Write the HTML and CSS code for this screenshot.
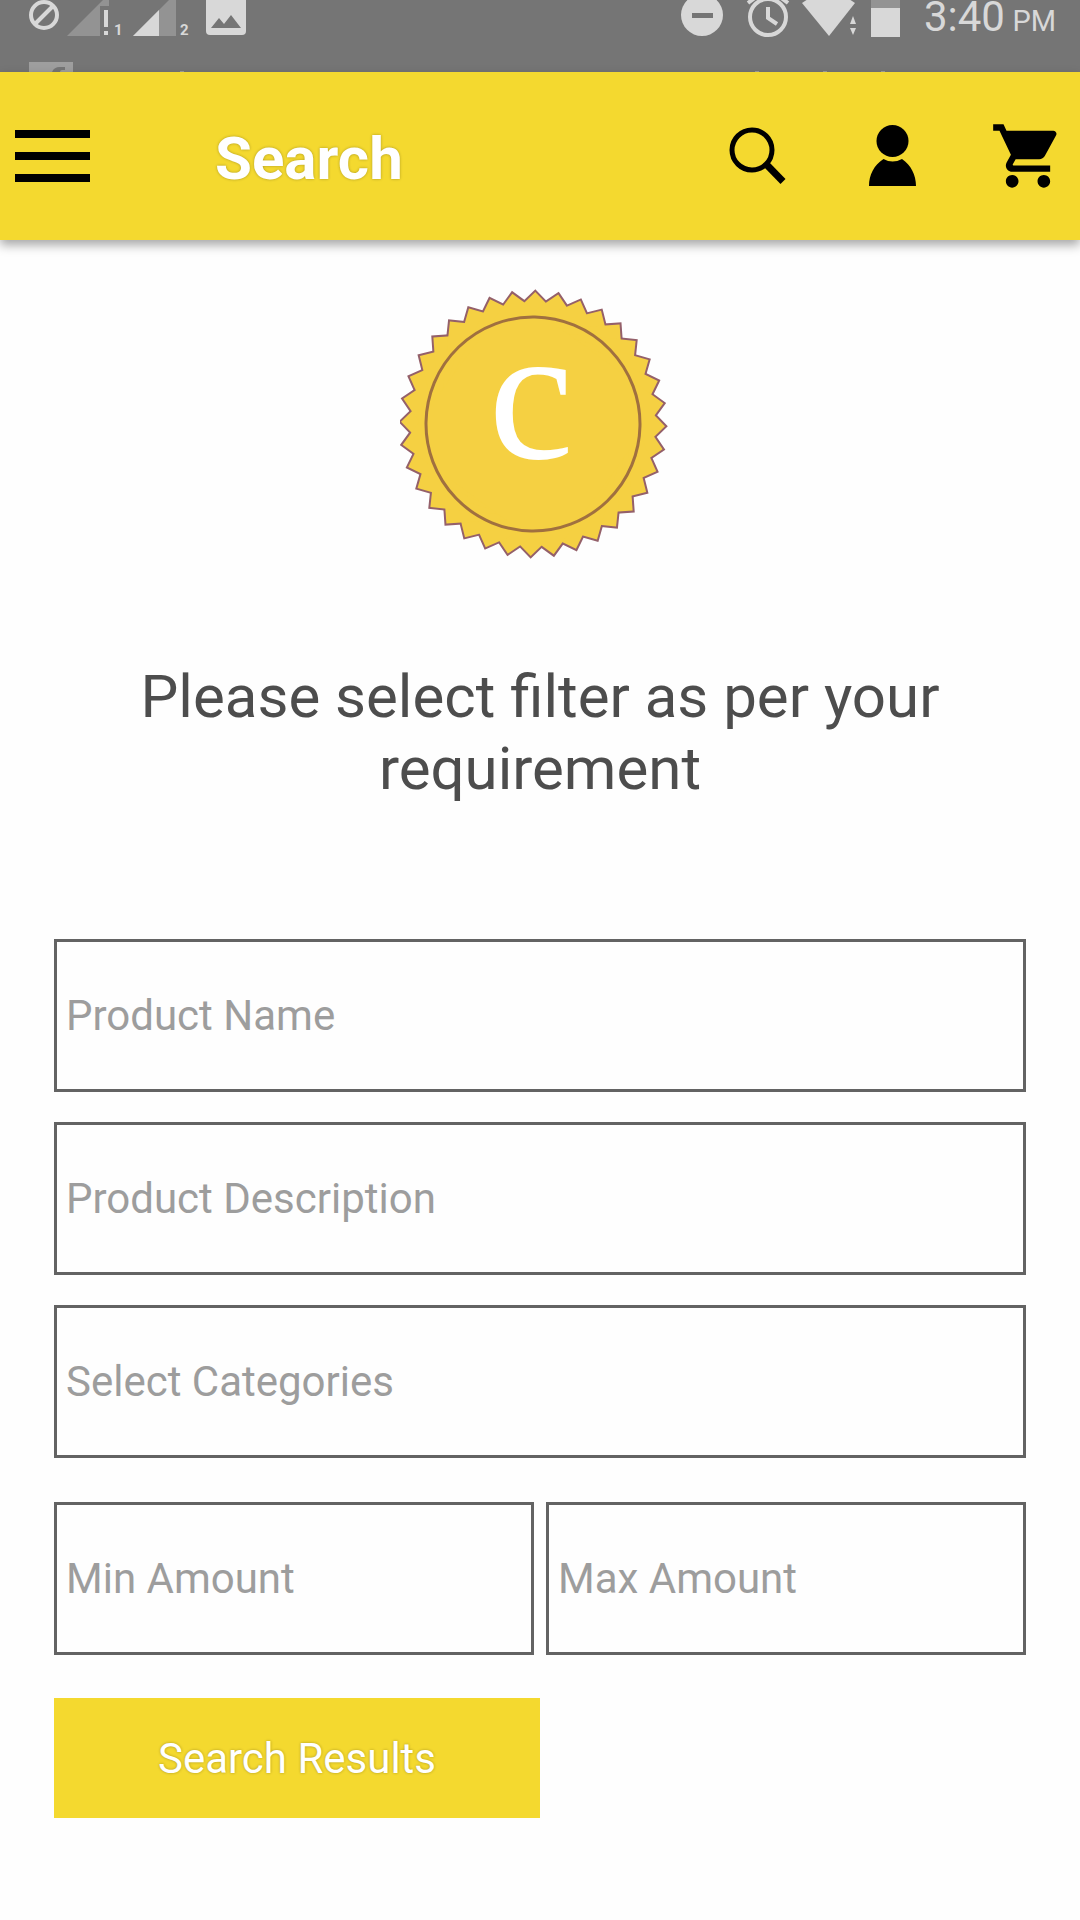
FILE: index.html
```html
<!DOCTYPE html>
<html lang="en">
<head>
<meta charset="utf-8">
<meta name="viewport" content="width=device-width, initial-scale=1">
<title>Search</title>
<link rel="stylesheet" href="styles.css">
</head>
<body>
<div class="status">
  <svg class="status-left" viewBox="0 0 260 72" aria-hidden="true">
    <g class="line"><circle cx="44" cy="15" r="13"/><path d="M35 24 53 6"/></g>
    <path class="dim" d="M67 36 103 0h6v6h-9v30z"/>
    <path class="lit" d="M104 10h4v17h-4zM104 31h4v4h-4z"/>
    <path class="dim" d="M133 36 169 0h7v36z"/>
    <path class="lit" d="M133 36 159 10v26z"/>
    <path class="lit" d="M206 0h40v31q0 4-4 4h-32q-4 0-4-4z"/>
    <path class="hole" d="M211 28 219 18 224 24 231 15 241 28z"/>
    <text class="sim" x="114" y="35">1</text>
    <text class="sim" x="180" y="35">2</text>
    <path class="ghost" d="M29 62h44v10H29z"/>
    <path class="hole" d="M52 72q2-5 8-5h5v3h-3q-2 0-2 2z"/>
    <path class="ghost" d="M180 71h4v1h-4z"/>
  </svg>
  <svg class="status-right" viewBox="0 0 224 72" aria-hidden="true">
    <circle class="lit" cx="22" cy="15" r="21"/>
    <path class="hole" d="M12 13h21v5H12z"/>
    <g class="line"><circle cx="88" cy="17" r="18"/><path d="M88 7v11l9 6M68 3l8-6M108 3l-8-6"/></g>
    <path class="lit" d="M122 3 128-1h41l6 4-26 33z"/>
    <path class="lit" d="M173 16l3 8h-6zM170 28h6l-3 7z"/>
    <path class="dim" d="M191 0h29v8h-29z"/>
    <path class="lit" d="M191 8h29v29h-29z"/>
    <path class="ghost" d="M75 71h4v1h-4zM143 71h4v1h-4zM201 71h4v1h-4z"/>
  </svg>
  <div class="clock">3:40 <span class="meridiem">PM</span></div>
</div>

<header class="bar">
  <button class="icon-btn" type="button" aria-label="Menu">
    <svg class="menu-icon" viewBox="0 0 75 76"><path d="M0 12h75v8H0zM0 34h75v8H0zM0 56h75v8H0z"/></svg>
  </button>
  <h1 class="title">Search</h1>
  <nav class="actions" aria-label="Shortcuts">
    <button class="icon-btn" type="button" aria-label="Search">
      <svg class="icon" viewBox="0 0 76 76"><circle cx="34" cy="32" r="20" fill="none" stroke="#000" stroke-width="5"/><path d="M48 46 65 63.500" stroke="#000" stroke-width="7"/></svg>
    </button>
    <button class="icon-btn" type="button" aria-label="Account">
      <svg class="icon" viewBox="0 0 76 76"><circle cx="38.500" cy="23" r="16"/><path d="M15 68C15 57 20 47 29.500 41Q38.500 46 48 41C57 47 62 57 62 68z"/></svg>
    </button>
    <button class="icon-btn" type="button" aria-label="Cart">
      <svg class="icon" viewBox="0 0 24 24"><path d="M7 18c-1.100 0-1.990.9-1.990 2S5.900 22 7 22s2-.9 2-2-.9-2-2-2zM1 2v2h2l3.600 7.590-1.350 2.450c-.16.280-.25.610-.25.960 0 1.100.9 2 2 2h12v-2H7.420c-.14 0-.25-.11-.25-.25l.03-.12.900-1.630h7.450c.750 0 1.410-.410 1.750-1.030l3.580-6.490c.080-.140.120-.310.120-.480 0-.550-.450-1-1-1H5.210l-.94-2H1zm16 16c-1.100 0-1.990.9-1.990 2s.89 2 1.990 2 2-.9 2-2-.9-2-2-2z"/></svg>
    </button>
  </nav>
</header>

<main class="page">
  <svg class="badge" viewBox="0 0 280 280" role="img" aria-label="C">
    <defs>
      <path id="square" d="M0-132 132 0 0 132-132 0z"/>
      <g id="seal">
        <use href="#square"/>
        <use href="#square" transform="rotate(10)"/>
        <use href="#square" transform="rotate(20)"/>
        <use href="#square" transform="rotate(30)"/>
        <use href="#square" transform="rotate(40)"/>
        <use href="#square" transform="rotate(50)"/>
        <use href="#square" transform="rotate(60)"/>
        <use href="#square" transform="rotate(70)"/>
        <use href="#square" transform="rotate(80)"/>
      </g>
    </defs>
    <g transform="translate(133 140) rotate(1)">
      <use class="seal-edge" href="#seal"/>
      <use class="seal-fill" href="#seal"/>
      <circle class="seal-ring" r="107"/>
    </g>
    <text class="seal-letter" x="131" y="174">c</text>
  </svg>

  <p class="lead">Please select filter as per your requirement</p>

  <form class="filters">
    <input class="field" type="text" placeholder="Product Name" aria-label="Product Name">
    <input class="field" type="text" placeholder="Product Description" aria-label="Product Description">
    <input class="field" type="text" placeholder="Select Categories" aria-label="Select Categories">
    <div class="range">
      <input class="field" type="text" inputmode="numeric" placeholder="Min Amount" aria-label="Min Amount">
      <input class="field" type="text" inputmode="numeric" placeholder="Max Amount" aria-label="Max Amount">
    </div>
    <button class="submit" type="submit">Search Results</button>
  </form>
</main>
</body>
</html>
```

FILE: styles.css
```css
* {
  box-sizing: border-box;
}

body {
  margin: 0;
  background: #fefefe;
  color: #4d4d4d;
  font-family: Roboto, sans-serif;
}

svg {
  display: block;
}

.status {
  display: flex;
  height: 72px;
  padding-right: 24px;
  background: #757575;
  color: #d8d8d8;
  overflow: hidden;
}

.status-left {
  width: 260px;
  height: 72px;
  margin-right: auto;
}

.status-right {
  width: 224px;
  height: 72px;
  margin-right: 20px;
}

.lit { fill: #d8d8d8; }
.dim { fill: #939393; }
.hole { fill: #757575; }
.ghost { fill: #9e9e9e; }

.line {
  fill: none;
  stroke: #d8d8d8;
  stroke-width: 4;
}

.sim {
  fill: #d8d8d8;
  font-size: 15px;
  font-weight: 700;
}

.clock {
  font-size: 42px;
  line-height: 34px;
  white-space: nowrap;
}

.meridiem {
  margin-left: -3px;
  font-size: 29px;
}

.bar {
  position: relative;
  display: flex;
  align-items: center;
  height: 168px;
  padding: 0 14px 0 15px;
  background: #f4d92f;
  box-shadow: 0 5px 10px rgba(0, 0, 0, 0.35);
}

.icon-btn {
  padding: 0;
  border: 0;
  background: none;
  cursor: pointer;
}

.menu-icon {
  width: 75px;
  height: 76px;
}

.icon {
  width: 76px;
  height: 76px;
}

.title {
  margin: 0 0 0 125px;
  padding-top: 5px;
  color: #fff;
  font-size: 60px;
  font-weight: 700;
  line-height: 72px;
  text-shadow: 0 0 3px rgba(0, 0, 0, 0.3);
}

.actions {
  display: flex;
  gap: 60px;
  margin-left: auto;
}

.page {
  padding: 44px 54px 96px;
}

.badge {
  width: 280px;
  height: 280px;
  margin: 0 auto;
}

.seal-edge {
  fill: none;
  stroke: #94606a;
  stroke-width: 4;
}

.seal-fill {
  fill: #f5d042;
}

.seal-ring {
  fill: none;
  stroke: #a0703f;
  stroke-width: 3;
}

.seal-letter {
  fill: #fff;
  font-family: "Liberation Serif", serif;
  font-size: 192px;
  text-anchor: middle;
}

.lead {
  margin: 97px 0 134px;
  font-size: 60px;
  line-height: 72px;
  text-align: center;
}

.filters {
  display: flex;
  flex-direction: column;
  gap: 30px;
}

.field {
  width: 100%;
  min-width: 0;
  height: 153px;
  padding: 0 9px;
  border: 3px solid #636363;
  border-radius: 0;
  background: transparent;
  color: #4d4d4d;
  font: 42px Roboto, sans-serif;
}

.field::placeholder {
  color: #9d9d9d;
  opacity: 1;
}

.range {
  display: grid;
  grid-template-columns: 1fr 1fr;
  gap: 12px;
  margin: 14px 0 13px;
}

.submit {
  width: 50%;
  height: 120px;
  padding: 0;
  border: 0;
  background: #f4d92f;
  color: #fff;
  font: 42px Roboto, sans-serif;
  text-shadow: 0 0 3px rgba(0, 0, 0, 0.3);
  cursor: pointer;
}
```
